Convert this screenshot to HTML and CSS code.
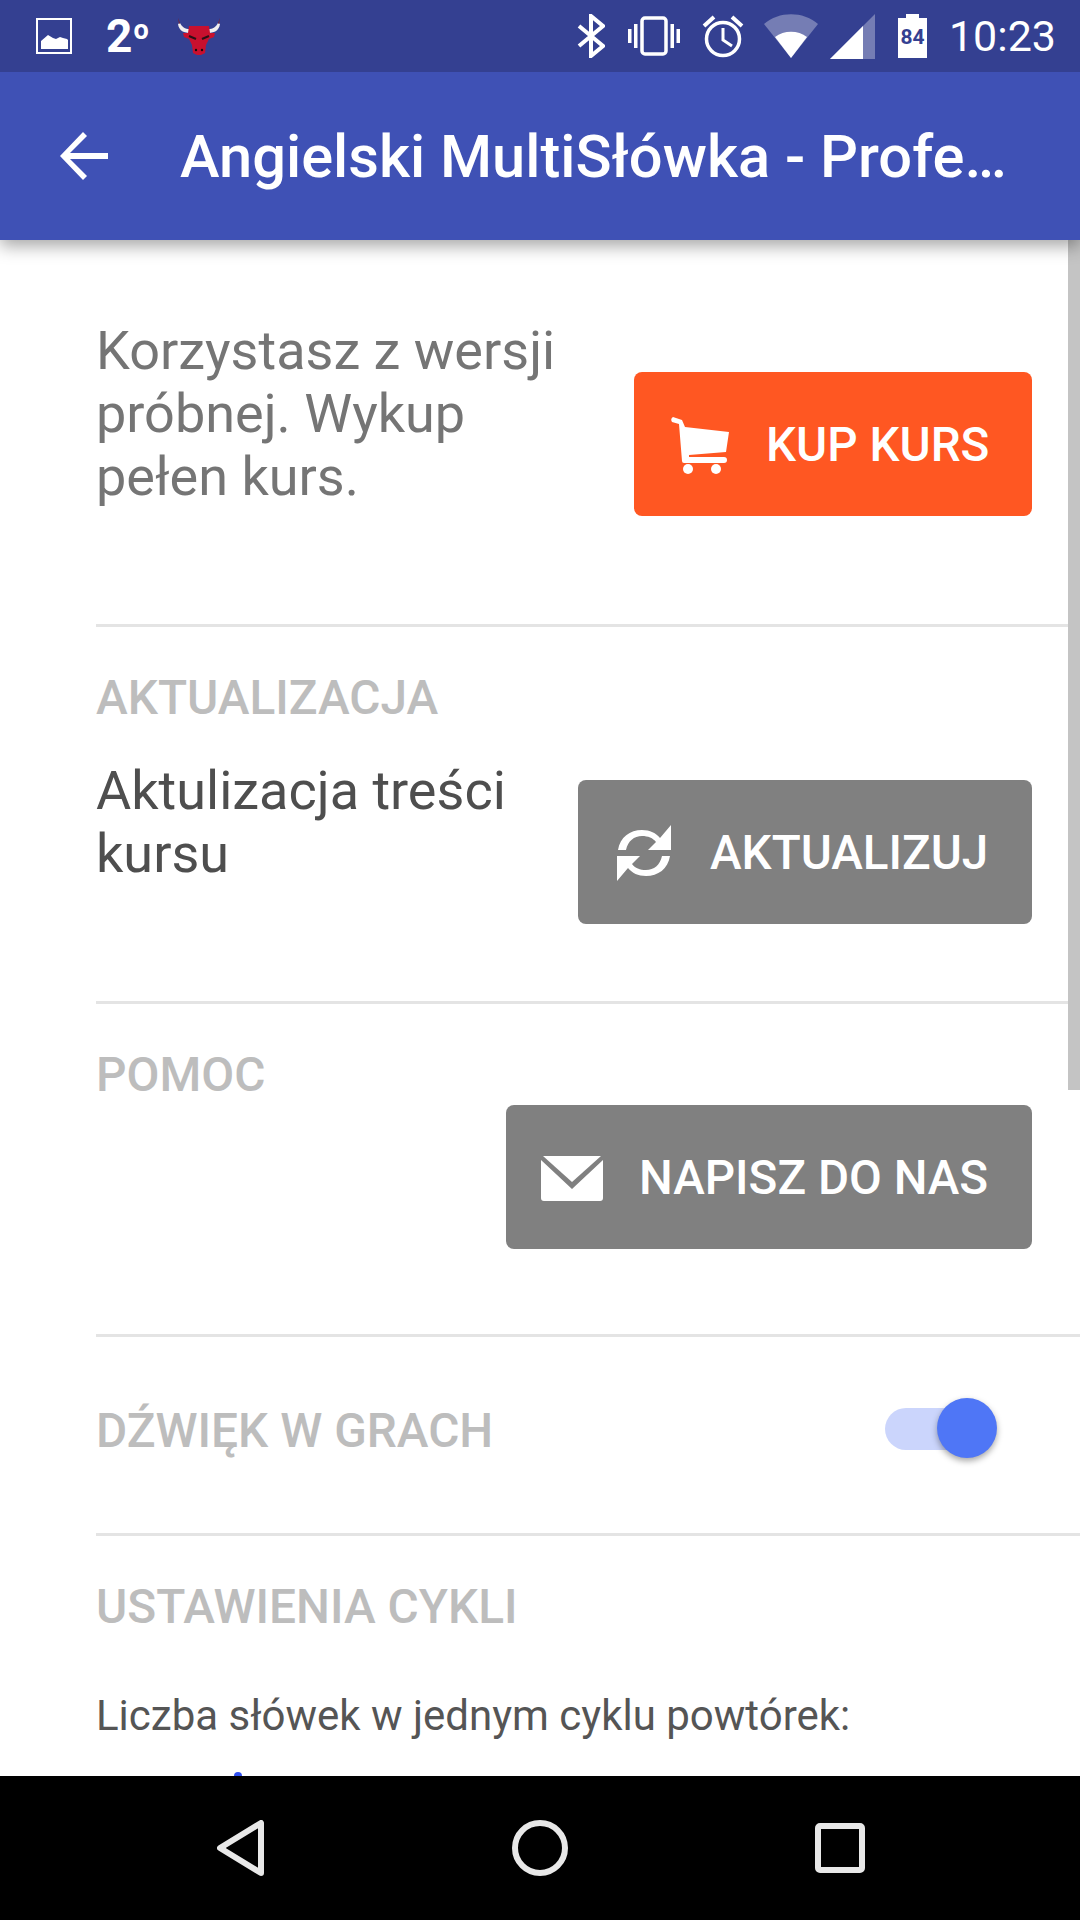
FILE: index.html
```html
<!DOCTYPE html>
<html lang="pl">
<head>
<meta charset="utf-8">
<title>Angielski MultiSłówka</title>
<link rel="stylesheet" href="styles.css">
</head>
<body>
<div class="screen">
  <header class="status">
    <svg class="ic-image" viewBox="0 0 36 36"><rect x="1" y="1" width="34" height="34" fill="none" stroke="#fff" stroke-width="2"/><path d="M5 31V23l7-6 5 3 3 1 4-2 3 1 4 1 1 1v9z" fill="#fff"/></svg>
    <span class="temp">2<sup class="deg">o</sup></span>
    <svg class="ic-bull" viewBox="0 0 44 38"><path d="M1 7c1 7 6 9 13 9l1-4c-6 1-10-2-12-6zM43 7c-1 7-6 9-13 9l-1-4c6 1 10-2 12-6z" fill="#f1efef"/><path d="M1 1l1 6 1-1zM43 1l-1 6-1-1z" fill="#7a2233"/><path d="M12 9h20l1 7 5 0-1 4-5 2-3 6-1 8-4 2h-4l-4-2-1-8-3-6-5-2-1-4 5 0z" fill="#c8102e"/><path d="M12 19l7 3M32 19l-7 3" stroke="#2a1015" stroke-width="2"/><circle cx="19" cy="33" r="1.2" fill="#1a0a0c"/><circle cx="25" cy="33" r="1.2" fill="#1a0a0c"/></svg>
    <span class="status-spacer"></span>
    <svg class="ic-bt" viewBox="0 0 28 44"><path d="M2 12l24 20-12 10V2l12 10L2 32" fill="none" stroke="#fff" stroke-width="4"/></svg>
    <svg class="ic-vib" viewBox="0 0 54 40"><rect x="15" y="2" width="24" height="36" rx="3" fill="none" stroke="#fff" stroke-width="3.5"/><path d="M1 13v14h3.500V13zM7 8v24h3.500V8zM43.500 8v24H47V8zM49.500 13v14H53V13z" fill="#fff"/></svg>
    <svg class="ic-alarm" viewBox="0 0 42 44"><circle cx="21" cy="25" r="16.500" fill="none" stroke="#fff" stroke-width="3.500"/><path d="M21 14v12l9 6" fill="none" stroke="#fff" stroke-width="3"/><path d="M2 12L12 3M40 12L30 3" stroke="#fff" stroke-width="4"/></svg>
    <svg class="ic-wifi" viewBox="0 0 54 44"><path d="M0 10C15-3 39-3 54 10L27 44z" fill="#fff" fill-opacity=".32"/><path d="M11 23c9-7 23-7 32 0L27 44z" fill="#fff"/></svg>
    <svg class="ic-signal" viewBox="0 0 45 45"><path d="M45 0v45H0z" fill="#fff" fill-opacity=".32"/><path d="M33 12v33H0z" fill="#fff"/></svg>
    <svg class="ic-batt" viewBox="0 0 29 44"><path d="M8 0h13v4h8v40H0V4h8z" fill="#fff"/><path d="M8 0h13v4h8v4H0V4h8z" fill="#fff" fill-opacity=".5"/><text class="batt-text" x="14.500" y="30" text-anchor="middle">84</text></svg>
    <span class="clock">10:23</span>
  </header>

  <div class="toolbar">
    <svg class="ic-back" viewBox="0 0 48 48"><path d="M48 21H10L27 4l-4-4L0 24l23 24 4-4-17-17h38z" fill="#fff"/></svg>
    <h1 class="title">Angielski MultiSłówka - Profe…</h1>
  </div>

  <main class="content">
    <section class="row-buy">
      <p class="lead muted">Korzystasz z wersji próbnej. Wykup pełen kurs.</p>
      <a class="btn btn-buy">
        <svg class="ic-cart" viewBox="0 0 60 58"><path d="M3 1l9 3 3 7 44 5-3 20-37 3 0 2h35q3 0 3 3t-3 3H14q-2 0-2-2L9 8 2 6q-2-3 1-5z" fill="#fff"/><circle cx="18" cy="53" r="5" fill="#fff"/><circle cx="46" cy="53" r="5" fill="#fff"/></svg>
        <span>KUP KURS</span>
      </a>
    </section>

    <section class="sec sec-update">
      <h2 class="label">AKTUALIZACJA</h2>
      <div class="row-update">
        <p class="lead dark">Aktulizacja treści kursu</p>
        <a class="btn btn-update">
          <svg class="ic-sync" viewBox="0 0 58 60"><path d="M3 27C5 14 15 7 27 7c8 0 14 3 18 8l11-13v25H33l8-8c-3-4-8-6-14-6-8 0-14 5-16 14zM55 33C53 46 43 53 31 53c-8 0-14-3-18-8L2 58V33h23l-8 8c3 4 8 6 14 6 8 0 14-5 16-14z" fill="#fff"/></svg>
          <span>AKTUALIZUJ</span>
        </a>
      </div>
    </section>

    <section class="sec sec-help">
      <h2 class="label">POMOC</h2>
      <div class="row-help">
        <a class="btn btn-help">
          <svg class="ic-mail" viewBox="0 0 62 45"><path d="M2 0h58l-29 26z" fill="#fff"/><path d="M0 4l31 29L62 4v38q0 3-3 3H3q-3 0-3-3z" fill="#fff"/></svg>
          <span>NAPISZ DO NAS</span>
        </a>
      </div>
    </section>

    <section class="sec sec-sound">
      <h2 class="label">DŹWIĘK W GRACH</h2>
      <div class="switch"><span class="thumb"></span></div>
    </section>

    <section class="sec sec-cycles">
      <h2 class="label">USTAWIENIA CYKLI</h2>
      <p class="small">Liczba słówek w jednym cyklu powtórek:</p>
      <span class="slider-tip"></span>
    </section>
    <div class="scrollbar"></div>
  </main>

  <nav class="navbar">
    <svg class="ic-navback" viewBox="0 0 48 56"><path d="M44 3v50L3 28z" fill="none" stroke="#e8e8e8" stroke-width="6" stroke-linejoin="round"/></svg>
    <svg class="ic-navhome" viewBox="0 0 56 56"><circle cx="28" cy="28" r="25" fill="none" stroke="#e8e8e8" stroke-width="6"/></svg>
    <svg class="ic-navrec" viewBox="0 0 50 50"><rect x="3" y="3" width="44" height="44" rx="2" fill="none" stroke="#e8e8e8" stroke-width="6"/></svg>
  </nav>
</div>
</body>
</html>
```
FILE: styles.css
```css
* { box-sizing: border-box; }
html, body { margin: 0; padding: 0; background: #fff; }
body { font-family: Roboto, "Noto Sans", sans-serif; }
.screen { width: 1080px; height: 1920px; display: flex; flex-direction: column; overflow: hidden; }

.status { height: 72px; flex: none; background: #344091; display: flex; align-items: center; color: #fff; padding-left: 36px; position: relative; z-index: 3; }
.status svg { display: block; flex: none; }
.ic-image { width: 36px; height: 36px; }
.temp { font-size: 46px; font-weight: 700; margin-left: 34px; width: 71px; line-height: 1; letter-spacing: -2px; }
.deg { font-size: 27px; vertical-align: 13px; line-height: 0; margin-left: 3px; }
.ic-bull { width: 44px; height: 38px; }
.status-spacer { flex: 1; }
.ic-bt { width: 28px; height: 44px; }
.ic-vib { width: 54px; height: 40px; margin-left: 22px; }
.ic-alarm { width: 42px; height: 44px; margin-left: 21px; }
.ic-wifi { width: 54px; height: 44px; margin-left: 20px; }
.ic-signal { width: 45px; height: 45px; margin-left: 12px; }
.ic-batt { width: 29px; height: 44px; margin-left: 23px; }
.batt-text { font-size: 21px; font-weight: 700; fill: #344091; font-family: Roboto, sans-serif; }
.clock { font-size: 43px; font-weight: 400; margin-left: 22px; margin-right: 24px; }

.toolbar { height: 168px; flex: none; background: #3f51b5; display: flex; align-items: center; padding-left: 60px; box-shadow: 0 6px 16px rgba(0,0,0,.35); position: relative; z-index: 2; }
.ic-back { width: 48px; height: 48px; display: block; flex: none; }
.title { margin: 2px 0 0 72px; color: #fff; font-size: 59.6px; font-weight: 500; white-space: nowrap; }

.content { flex: 1; min-height: 0; overflow: hidden; position: relative; padding-left: 96px; }
.scrollbar { position: absolute; right: 0; top: 0; width: 12px; height: 850px; background: #c4c4c4; }

.row-buy { height: 384px; display: flex; justify-content: space-between; align-items: flex-start; padding: 79px 48px 0 0; }
.lead { margin: 0; font-size: 54px; line-height: 63px; }
.muted { color: #757575; width: 480px; }
.dark { color: #4e4e4e; width: 440px; }
.btn { display: flex; align-items: center; height: 144px; padding-top: 2px; border-radius: 8px; color: #fff; font-size: 47.6px; font-weight: 500; white-space: nowrap; flex: none; }
.btn span { display: block; }
.btn-buy { width: 398px; background: #ff5722; padding-left: 36px; gap: 36px; margin-top: 53px; }
.btn-update { width: 454px; background: #808080; padding-left: 37px; gap: 37px; margin-top: 21px; }
.btn-help { width: 526px; background: #808080; padding-left: 35px; gap: 36px; }
.ic-cart { width: 60px; height: 58px; }
.ic-sync { width: 58px; height: 60px; }
.ic-mail { width: 62px; height: 45px; }

.sec { border-top: 3px solid #e4e4e4; }
.label { margin: 0; color: #bdbdbd; font-size: 47.8px; font-weight: 500; line-height: 60px; }
.sec-update { height: 377px; padding: 41px 48px 0 0; }
.row-update { display: flex; justify-content: space-between; align-items: flex-start; margin-top: 31px; }
.sec-help { height: 333px; padding: 41px 48px 0 0; }
.row-help { display: flex; justify-content: flex-end; }
.sec-sound { height: 199px; display: flex; align-items: center; padding-bottom: 8px; position: relative; }
.switch { position: absolute; left: 789px; top: 71px; width: 90px; height: 42px; border-radius: 21px; background: #cbd5fc; }
.thumb { position: absolute; right: -22px; top: -10px; width: 60px; height: 60px; border-radius: 50%; background: #4f76f6; box-shadow: 0 3px 6px rgba(0,0,0,.35); }
.sec-cycles { padding-top: 41px; position: relative; height: 243px; }
.small { margin: 54px 0 0; color: #555; font-size: 42px; line-height: 50px; }
.slider-tip { position: absolute; left: 138px; bottom: -4px; width: 8px; height: 8px; border-radius: 50%; background: #3050f0; }

.navbar { height: 144px; flex: none; background: #000; display: flex; align-items: center; padding-left: 217px; position: relative; z-index: 2; }
.navbar svg { display: block; flex: none; }
.ic-navback { width: 48px; height: 56px; }
.ic-navhome { width: 56px; height: 56px; margin-left: 247px; }
.ic-navrec { width: 50px; height: 50px; margin-left: 247px; }
```
